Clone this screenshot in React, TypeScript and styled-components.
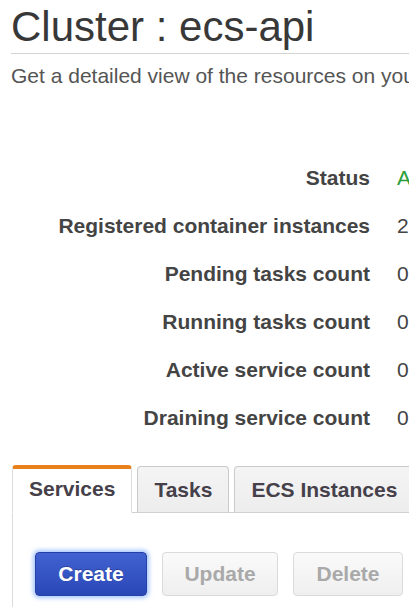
import React from "react";
import styled, { createGlobalStyle } from "styled-components";

const GlobalStyle = createGlobalStyle`
  html, body {
    margin: 0;
    padding: 0;
    background: #ffffff;
    overflow: hidden;
  }
  body {
    font-family: "Liberation Sans", Arial, Helvetica, sans-serif;
    color: #444;
  }
`;

const Page = styled.div`
  width: 409px;
  height: 607px;
  padding-left: 11px;
  box-sizing: border-box;
  overflow: hidden;
  white-space: nowrap;
`;

const Title = styled.h1`
  margin: 0;
  padding: 3px 0 2px 0;
  font-size: 42px;
  line-height: 48px;
  font-weight: normal;
  color: #383838;
  border-bottom: 1px solid #d3d3d3;
`;

const Subtitle = styled.p`
  margin: 10px 0 0 0;
  font-size: 21px;
  line-height: 24px;
  color: #555;
`;

const Stats = styled.div`
  display: grid;
  grid-template-columns: 359px auto;
  column-gap: 27px;
  margin-top: 66px;
  font-size: 21px;
`;

const Label = styled.div`
  text-align: right;
  font-weight: bold;
  line-height: 48px;
  color: #444;
`;

const Value = styled.div<{ $status?: boolean }>`
  line-height: 48px;
  color: ${(p) => (p.$status ? "#2a9d3a" : "#444")};
`;

const Tabs = styled.div`
  display: flex;
  align-items: flex-end;
  gap: 5px;
  margin-top: 23px;
  margin-left: 1px;
  border-bottom: 1px solid #d0d0d0;
`;

const Tab = styled.div<{ $active?: boolean }>`
  box-sizing: border-box;
  height: ${(p) => (p.$active ? "48px" : "47px")};
  margin-bottom: -1px;
  padding: ${(p) => (p.$active ? "8px 16px 0" : "11px 16px 0")};
  font-size: 21px;
  line-height: 24px;
  font-weight: bold;
  color: #454049;
  border: 1px solid ${(p) => (p.$active ? "#dcdcdc" : "#cacaca")};
  border-top: ${(p) => (p.$active ? "4px solid #e8811c" : "1px solid #cacaca")};
  border-bottom: ${(p) => (p.$active ? "1px solid #ffffff" : "1px solid #d0d0d0")};
  border-radius: 4px 4px 0 0;
  background: ${(p) =>
    p.$active ? "#ffffff" : "linear-gradient(#f4f4f4, #ededed)"};
  flex-shrink: 0;
`;

const Panel = styled.div`
  margin-left: 1px;
  border-left: 1px solid #dcdcdc;
  padding: 39px 0 0 22px;
  height: 120px;
  display: flex;
  gap: 15px;
  align-items: flex-start;
`;

const Button = styled.button<{ $primary?: boolean; $w: number }>`
  box-sizing: border-box;
  width: ${(p) => p.$w}px;
  height: 44px;
  font-family: "Liberation Sans", Arial, Helvetica, sans-serif;
  font-size: 21px;
  line-height: 24px;
  font-weight: bold;
  border-radius: 4px;
  padding: 0;
  flex-shrink: 0;
  color: ${(p) => (p.$primary ? "#ffffff" : "#a9a9a9")};
  background: ${(p) =>
    p.$primary
      ? "linear-gradient(#4262d2, #2a47b6)"
      : "linear-gradient(#fafafa, #efefef)"};
  border: 1px solid ${(p) => (p.$primary ? "#2540a6" : "#dadada")};
  box-shadow: ${(p) =>
    p.$primary ? "0 0 4px 2px rgba(90, 150, 255, 0.55)" : "none"};
  text-shadow: ${(p) => (p.$primary ? "0 -1px 0 rgba(0,0,0,0.25)" : "none")};
`;

const stats: { label: string; value: string; status?: boolean }[] = [
  { label: "Status", value: "ACTIVE", status: true },
  { label: "Registered container instances", value: "2" },
  { label: "Pending tasks count", value: "0" },
  { label: "Running tasks count", value: "0" },
  { label: "Active service count", value: "0" },
  { label: "Draining service count", value: "0" },
];

export default function App() {
  return (
    <>
      <GlobalStyle />
      <Page>
        <Title>Cluster : ecs-api</Title>
        <Subtitle>Get a detailed view of the resources on your cluster.</Subtitle>
        <Stats>
          {stats.map((s) => (
            <React.Fragment key={s.label}>
              <Label>{s.label}</Label>
              <Value $status={s.status}>{s.value}</Value>
            </React.Fragment>
          ))}
        </Stats>
        <Tabs>
          <Tab $active>Services</Tab>
          <Tab>Tasks</Tab>
          <Tab>ECS Instances</Tab>
        </Tabs>
        <Panel>
          <Button $primary $w={112}>Create</Button>
          <Button $w={116}>Update</Button>
          <Button $w={110}>Delete</Button>
        </Panel>
      </Page>
    </>
  );
}
